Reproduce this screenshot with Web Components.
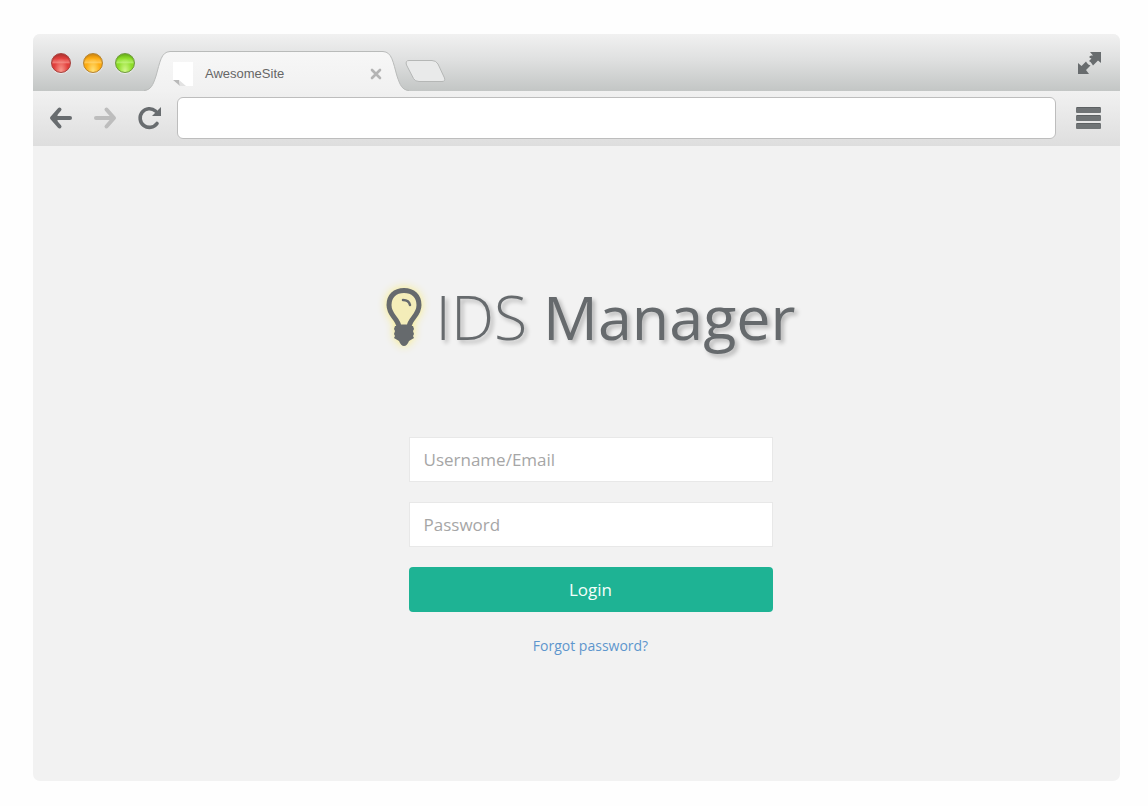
<!DOCTYPE html>
<html lang="en">
<head>
<meta charset="utf-8">
<title>IDS Manager</title>
<style>
  body {
    margin: 0;
    padding: 34px 28px 25px 33px;
    min-height: 100vh;
    box-sizing: border-box;
    display: flex;
    background: #fefefe;
    font-family: "Open Sans", "Noto Sans", sans-serif;
    --ink: #666a6d;
    --page: #f2f2f2;
    --accent: #1eb394;
    --link: #5e96cd;
  }
</style>
</head>
<body>
<browser-window>
  <browser-tab slot="tabs">AwesomeSite</browser-tab>
  <login-form>
    <brand-logo slot="brand">IDS <b>Manager</b></brand-logo>
  </login-form>
</browser-window>

<script>
class BrowserWindow extends HTMLElement {
  constructor() {
    super();
    this.attachShadow({ mode: 'open' });
    this.shadowRoot.innerHTML = `
<style>
:host {
  flex: 1;
  display: flex;
  flex-direction: column;
  border-radius: 7px;
  overflow: hidden;
  background: var(--page);
}

* {
  box-sizing: border-box;
}

button {
  border: 0;
  padding: 0;
  background: none;
  display: block;
  cursor: pointer;
}

svg {
  display: block;
}

.titlebar {
  display: flex;
  align-items: center;
  height: 57px;
  padding: 0 18px;
  background: linear-gradient(#f1f1f1, #dfe0e0 45%, #c3c6c5);
}

.lights {
  display: flex;
  gap: 12px;
}

.light {
  width: 20px;
  height: 20px;
  border-radius: 50%;
  border: 1px solid var(--edge);
  background: radial-gradient(ellipse at 50% 95%, var(--glow), transparent 55%),
    linear-gradient(var(--top), var(--mid) 25%, var(--shine) 48%, var(--mid) 55%, var(--mid));
  box-shadow: inset 0 1px 1px var(--top), 0 1px 1px #ececec;
}

.close { --edge: #a8403c; --top: #b23633; --mid: #e2403d; --shine: #f17b75; --glow: #fa9c90; }
.min { --edge: #b5832f; --top: #d28a12; --mid: #fdac12; --shine: #ffc857; --glow: #ffe27a; }
.max { --edge: #6f9a3c; --top: #6bb21c; --mid: #8edd2a; --shine: #b1ee66; --glow: #d3f98c; }

.tabs {
  flex: 1;
  display: flex;
  align-items: flex-end;
  align-self: stretch;
  margin-left: 9px;
}

.newtab {
  align-self: center;
  margin: 17px 0 0 -4px;
}

.toolbar {
  display: flex;
  align-items: center;
  height: 55px;
  padding: 0 19px 1px 16px;
  background: linear-gradient(#f1f1f1, #dedede);
}

.nav {
  display: flex;
  gap: 20px;
  margin-right: 15px;
}

input {
  flex: 1;
  min-width: 0;
  height: 42px;
  margin-right: 20px;
  padding: 0 12px;
  border: 1px solid #bdbdbd;
  border-radius: 6px;
  background: #fff;
  font: 16px "Liberation Sans", Arial, sans-serif;
  color: #555;
}

main {
  flex: 1;
}
</style>
<header class="titlebar">
  <div class="lights">
    <button class="light close" aria-label="Close window"></button>
    <button class="light min" aria-label="Minimize"></button>
    <button class="light max" aria-label="Maximize"></button>
  </div>
  <div class="tabs">
    <slot name="tabs"></slot>
    <button class="newtab" aria-label="New tab">
      <svg width="41" height="24" viewBox="0 0 41 24">
        <path d="M4 1.500H27Q31 1.500 33 5L39.500 19Q40.500 22.500 37 22.500H14Q10 22.500 8.500 19.500L1.500 6Q0 1.500 4 1.500Z" fill="#e9eaea" stroke="#b5b7b6"/>
      </svg>
    </button>
  </div>
  <button aria-label="Full screen">
    <svg width="24" height="24" viewBox="0 0 24 24" fill="#686c6e">
      <path d="M12 1H23V12L20 9.500L15 14.500L14 13Q13 11 11 10L13.500 7.500Q10.500 6.500 11.500 5.500L13 4.500H15Z"/>
      <path d="M0 23V12L3.500 15L8 10.500L9 12Q10 13.500 12.500 14.500L8 19L11 23Z"/>
    </svg>
  </button>
</header>
<div class="toolbar">
  <nav class="nav">
    <button aria-label="Back">
      <svg width="24" height="24" viewBox="0 0 24 24" fill="none" stroke="#686c6f" stroke-width="4" stroke-linecap="round" stroke-linejoin="round">
        <path d="M10.500 3.500L3 12L10.500 20.500"/>
        <path d="M5 12H21"/>
        <path d="M4 12L8 8V16Z" stroke-width="1" fill="#686c6f"/>
      </svg>
    </button>
    <button aria-label="Forward" disabled>
      <svg width="24" height="24" viewBox="0 0 24 24" fill="none" stroke="#bdbdbd" stroke-width="4" stroke-linecap="round" stroke-linejoin="round">
        <path d="M13.500 3.500L21 12L13.500 20.500M3 12H20"/>
      </svg>
    </button>
    <button aria-label="Reload">
      <svg width="25" height="24" viewBox="0 0 25 24" fill="none" stroke="#686c6f" stroke-width="3.600" stroke-linecap="round">
        <path d="M20 17.500A9.300 9.300 0 1 1 18.500 5"/>
        <path d="M24 1V10H15Z" fill="#686c6f" stroke="none"/>
      </svg>
    </button>
  </nav>
  <input type="text" aria-label="Address">
  <button aria-label="Menu">
    <svg width="25" height="22" viewBox="0 0 25 22" fill="#707476">
      <rect y="0" width="25" height="6" rx="1"/>
      <rect y="8" width="25" height="6" rx="1"/>
      <rect y="16" width="25" height="6" rx="1"/>
      <path d="M1 .5H24M1 8.500H24M1 16.500H24" stroke="#5d6163"/>
    </svg>
  </button>
</div>
<main><slot></slot></main>
`;
  }
}

class BrowserTab extends HTMLElement {
  constructor() {
    super();
    this.attachShadow({ mode: 'open' });
    this.shadowRoot.innerHTML = `
<style>
:host {
  display: flex;
  height: 40px;
  font: 13px "Liberation Sans", Arial, sans-serif;
  color: #666;
}

svg {
  display: block;
  flex: none;
}

.body {
  display: flex;
  align-items: center;
  width: 213px;
  box-sizing: border-box;
  padding: 4px 1px 0 3px;
  border-top: 1px solid #b9bbba;
  background: linear-gradient(#f7f7f7, #f1f1f1);
}

.title {
  flex: 1;
  margin-left: 12px;
}

button {
  border: 0;
  padding: 0;
  background: none;
}
</style>
<svg width="26" height="40" viewBox="0 0 26 40">
  <defs><linearGradient id="g" x2="0" y2="1"><stop stop-color="#f7f7f7"/><stop offset="1" stop-color="#f1f1f1"/></linearGradient></defs>
  <path d="M0 40C7 39 9 34 12 25C16 11 17 1 26 .5V40Z" fill="url(#g)"/>
  <path d="M0 39.500C7 39 9 34 12 25C16 11 17 1 26 .5" fill="none" stroke="#b9bbba"/>
</svg>
<div class="body">
  <svg width="20" height="24" viewBox="0 0 20 24">
    <path d="M0 0H20V24H7L0 18Z" fill="#fff"/>
    <path d="M0 18H6L7 24Z" fill="#b9b9b9"/>
    <path d="M6 18L13 24H7Z" fill="#e2e2e2"/>
  </svg>
  <span class="title"><slot></slot></span>
  <button aria-label="Close tab">
    <svg width="12" height="12" viewBox="0 0 12 12" stroke="#b4b4b4" stroke-width="2.600" stroke-linecap="round">
      <path d="M2 2L10 10M10 2L2 10"/>
    </svg>
  </button>
</div>
<svg width="26" height="40" viewBox="0 0 26 40">
  <path d="M26 40C19 39 17 34 14 25C10 11 9 1 0 .5V40Z" fill="url(#g)"/>
  <path d="M26 39.500C19 39 17 34 14 25C10 11 9 1 0 .5" fill="none" stroke="#b9bbba"/>
</svg>
`;
  }
}

class BrandLogo extends HTMLElement {
  constructor() {
    super();
    this.attachShadow({ mode: 'open' });
    this.shadowRoot.innerHTML = `
<style>
:host {
  display: flex;
  align-items: center;
  justify-content: center;
  gap: 14px;
}

svg {
  display: block;
  flex: none;
  overflow: visible;
  filter: drop-shadow(0 0 5px #f8ec80);
}

h1 {
  margin: 0;
  font-size: 61px;
  line-height: 78px;
  font-weight: 300;
  white-space: nowrap;
  color: var(--ink);
  text-shadow: 3px 3px 4px rgba(0, 0, 0, 0.25);
}

::slotted(b) {
  font-weight: 500;
}
</style>
<svg width="36" height="58" viewBox="0 0 36 58">
  <path d="M13 39C12 30 3 28 3 17C3 8 9 2.500 18 2.500S33 8 33 17C33 28 24 30 23 39Z" fill="#f4edb9" stroke="#666a6d" stroke-width="5"/>
  <path d="M17 12Q23 12 24 17" fill="none" stroke="#666a6d" stroke-width="2.500" stroke-linecap="round"/>
  <path d="M9 38H27L28 41L27 43L28 46L27 48L28 50L23 53Q21 58 18 58T13 53L8 50L9 48L8 46L9 43L8 41Z" fill="#666a6d"/>
</svg>
<h1><slot></slot></h1>
`;
  }
}

class LoginForm extends HTMLElement {
  constructor() {
    super();
    this.attachShadow({ mode: 'open' });
    this.shadowRoot.innerHTML = `
<style>
:host {
  display: flex;
  flex-direction: column;
  align-items: center;
  padding: 132px 0 60px 28px;
}

form {
  display: flex;
  flex-direction: column;
  gap: 20px;
  width: 364px;
  max-width: 100%;
  margin-top: 81px;
}

input,
button {
  box-sizing: border-box;
  width: 100%;
  height: 45px;
  font: 17px "Open Sans", "Noto Sans", sans-serif;
}

input {
  padding: 0 14px;
  border: 1px solid #e8e8e8;
  background: #fff;
  color: #555;
}

input::placeholder {
  color: #a6a6a6;
}

button {
  border: 0;
  border-radius: 4px;
  background: var(--accent);
  color: #f4fffb;
  cursor: pointer;
}

a {
  align-self: center;
  font-size: 14px;
  line-height: 28px;
  color: var(--link);
  text-decoration: none;
}
</style>
<slot name="brand"></slot>
<form>
  <input type="text" placeholder="Username/Email" aria-label="Username/Email">
  <input type="password" placeholder="Password" aria-label="Password">
  <button type="submit">Login</button>
  <a href="#forgot">Forgot password?</a>
</form>
`;
    this.shadowRoot.querySelector('form').addEventListener('submit', (e) => e.preventDefault());
  }
}

customElements.define('browser-window', BrowserWindow);
customElements.define('browser-tab', BrowserTab);
customElements.define('brand-logo', BrandLogo);
customElements.define('login-form', LoginForm);
</script>
</body>
</html>
